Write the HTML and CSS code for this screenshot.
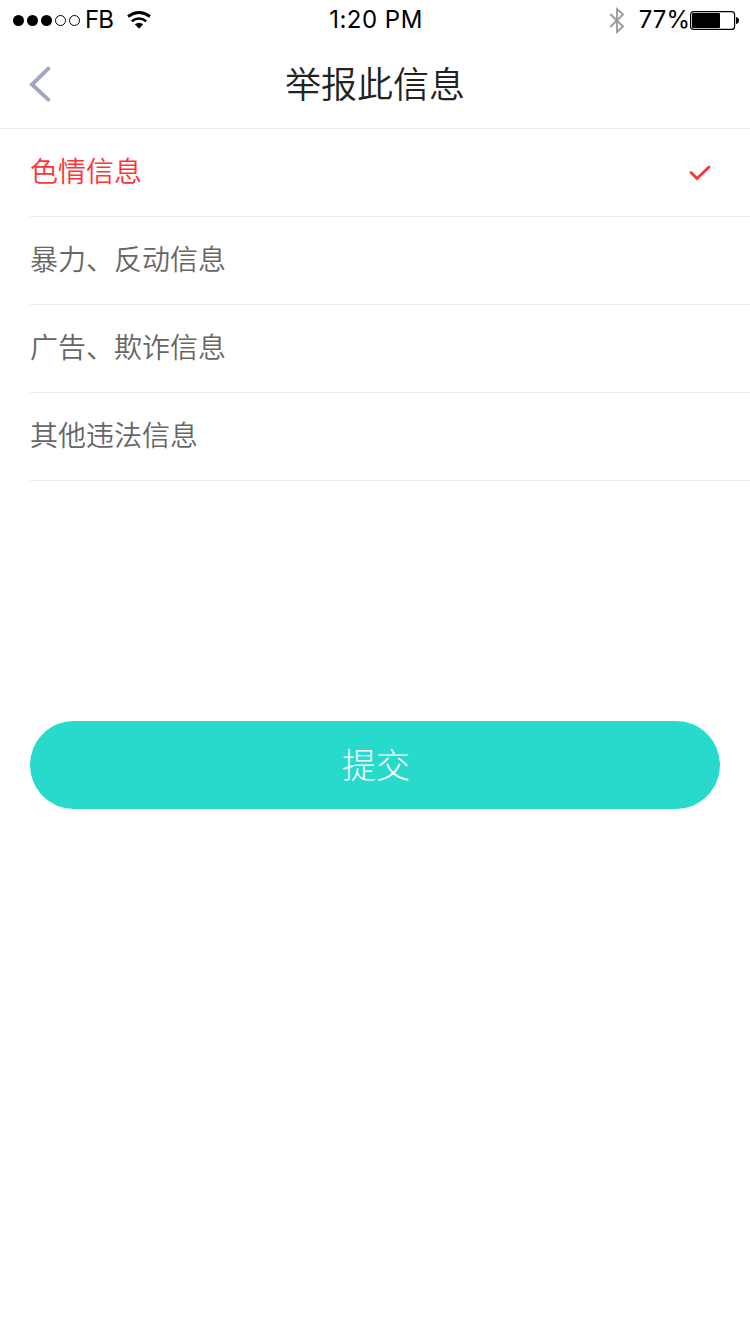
FILE: index.html
```html
<!DOCTYPE html>
<html lang="zh-CN">
<head>
    <meta charset="UTF-8">
    <meta name="viewport" content="width=device-width, initial-scale=1.0">
    <title>举报此信息</title>
    <link rel="stylesheet" href="styles.css">
</head>
<body>
    <!-- Status bar -->
    <div class="status-bar">
        <div class="status-left">
            <svg class="signal" width="68" height="12" viewBox="0 0 68 12">
                <circle cx="6.5" cy="6.5" r="5.5"/>
                <circle cx="20.5" cy="6.5" r="5.5"/>
                <circle cx="34.5" cy="6.5" r="5.5"/>
                <circle class="empty" cx="48.5" cy="6.5" r="5"/>
                <circle class="empty" cx="62.5" cy="6.5" r="5"/>
            </svg>
            <span class="carrier">FB</span>
            <svg class="wifi" width="24" height="18" viewBox="0 0 24 18">
                <path d="M1 5.5Q12 -2.5 23 5.5" fill="none" stroke="#000" stroke-width="2.8"/>
                <path d="M4.8 10.2Q12 4.8 19.2 10.2" fill="none" stroke="#000" stroke-width="2.6"/>
                <path d="M7.8 13.3Q12 10.2 16.2 13.3L12 17.8Z"/>
            </svg>
        </div>
        <div class="status-time">1:20 PM</div>
        <div class="status-right">
            <svg class="bluetooth" width="16" height="28" viewBox="0 0 16 28">
                <path d="M1.2 8L14 20.5L8 26V3L14 8.5L1.2 21" fill="none" stroke="#999" stroke-width="1.8"/>
            </svg>
            <span class="percent">77%</span>
            <svg class="battery" width="50" height="20" viewBox="0 0 50 20">
                <rect x="0.6" y="1.6" width="44" height="17.8" rx="3" fill="none" stroke="#000" stroke-width="1.2"/>
                <rect x="2" y="3" width="28" height="15" rx="1"/>
                <path d="M46 7Q49 7.5 49 10.5T46 14Z"/>
            </svg>
        </div>
    </div>

    <!-- Header -->
    <div class="header">
        <a class="back" href="#">
            <svg width="22" height="36" viewBox="0 0 22 36">
                <path d="M19.3 2.6L3 18.5L19.3 33.6" fill="none" stroke="#a0a8bd" stroke-width="4" stroke-linecap="round"/>
            </svg>
        </a>
        <h1>举报此信息</h1>
    </div>

    <!-- Report reasons -->
    <ul class="reason-list">
        <li class="active">
            <span>色情信息</span>
            <svg class="check" width="22" height="16" viewBox="0 0 22 16">
                <path d="M2 7.5L8 13.5L20 2" fill="none" stroke="#ff3338" stroke-width="2.8" stroke-linecap="round"/>
            </svg>
        </li>
        <li><span>暴力、反动信息</span></li>
        <li><span>广告、欺诈信息</span></li>
        <li><span>其他违法信息</span></li>
    </ul>

    <button class="submit">提交</button>
</body>
</html>
```
FILE: styles.css
```css
* { box-sizing: border-box; }
body { margin: 0; background-color: #fff; font-family: "Noto Sans CJK SC", sans-serif; }

.status-bar { display: grid; grid-template-columns: 1fr auto 1fr; align-items: center; height: 40px; padding: 0 10px 0 12px; font-family: Inter, "Liberation Sans", sans-serif; font-size: 24px; line-height: 40px; color: #000; }
.status-left, .status-right { display: flex; align-items: center; }
.status-right { justify-content: flex-end; }
.status-time { letter-spacing: 0.5px; }
.signal { overflow: visible; }
.signal .empty { fill: none; stroke: #000; stroke-width: 1; }
.carrier { margin-left: 5px; letter-spacing: -1px; }
.wifi { margin-left: 14px; }
.bluetooth { margin-right: 14px; }

.header { display: grid; grid-template-columns: 60px 1fr 60px; align-items: center; height: 89px; padding: 0 29px; border-bottom: 1px solid #ebebeb; }
.header h1 { margin: 0; padding-bottom: 4px; font-size: 36px; font-weight: 350; line-height: 84px; text-align: center; color: #222; }
.back { display: flex; }

.reason-list { margin: 0; padding: 0 0 0 30px; list-style: none; }
.reason-list li { display: flex; justify-content: space-between; align-items: center; height: 88px; padding-right: 39px; border-bottom: 1px solid #ebebeb; font-size: 28px; font-weight: 350; color: #666; }
.reason-list span { padding-bottom: 5px; }
.reason-list .active { color: #ff3338; }

.submit { display: block; width: 690px; height: 88px; margin: 240px auto 0; padding: 0 0 3px 2px; border: none; border-radius: 44px; background-color: #28dacb; font-family: inherit; font-size: 34px; font-weight: 300; color: #fff; cursor: pointer; }
```
